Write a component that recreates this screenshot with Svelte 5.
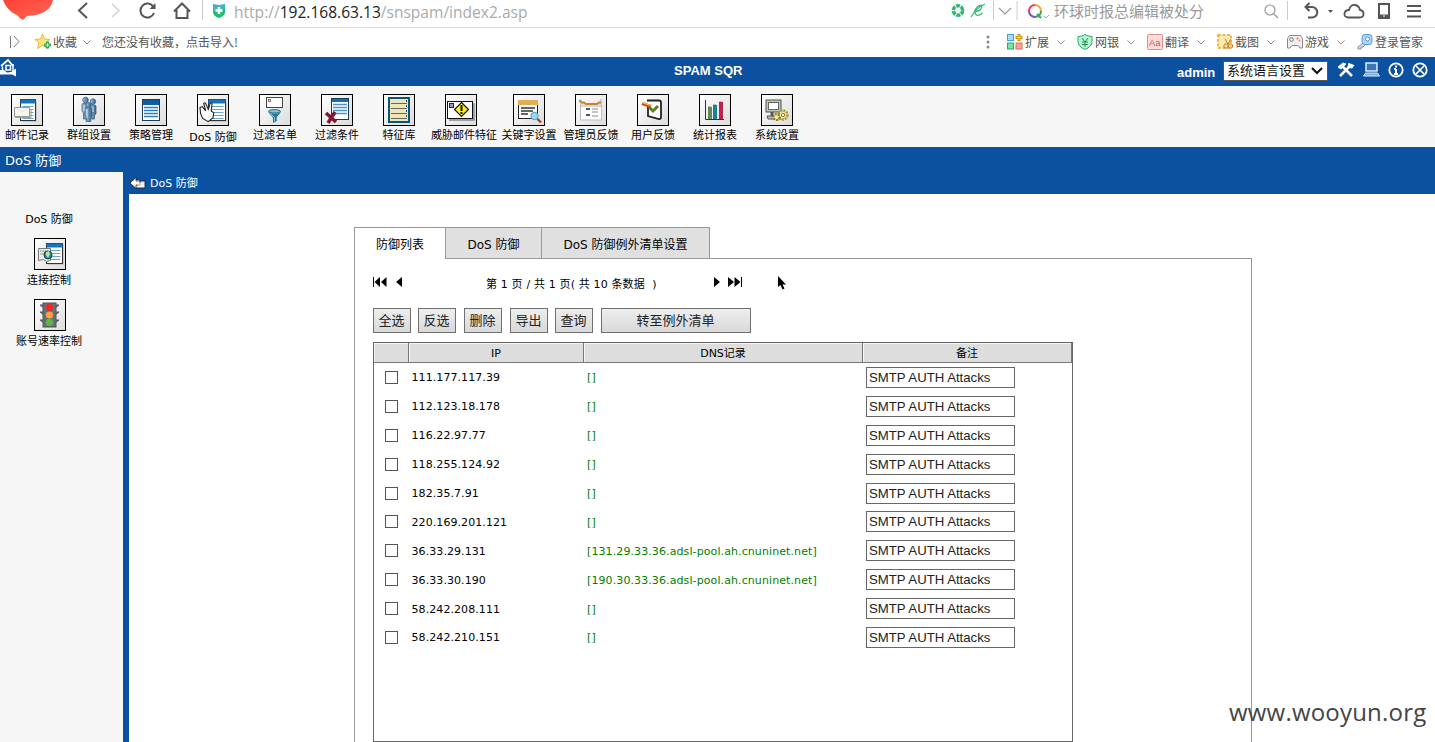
<script>
  const nav = [
    ['mail', '邮件记录'], ['group', '群组设置'], ['policy', '策略管理'], ['dos', 'DoS 防御'],
    ['filter', '过滤名单'], ['condition', '过滤条件'], ['library', '特征库'], ['threat', '威胁邮件特征'],
    ['keyword', '关键字设置'], ['admin', '管理员反馈'], ['user', '用户反馈'], ['report', '统计报表'], ['system', '系统设置']
  ];
  const side = [['connect', '连接控制'], ['traffic', '账号速率控制']];
  const tools = [
    ['ext', '扩展'], ['bank', '网银'], ['trans', '翻译'], ['shot', '截图'], ['game', '游戏'], ['key', '登录管家']
  ];
  const buttons = [['全选', 38, 7], ['反选', 38, 8], ['删除', 38, 8], ['导出', 38, 7], ['查询', 38, 8], ['转至例外清单', 150, 0]];
  const rows = [
    ['111.177.117.39', '[]'], ['112.123.18.178', '[]'], ['116.22.97.77', '[]'], ['118.255.124.92', '[]'],
    ['182.35.7.91', '[]'], ['220.169.201.121', '[]'],
    ['36.33.29.131', '[131.29.33.36.adsl-pool.ah.cnuninet.net]'],
    ['36.33.30.190', '[190.30.33.36.adsl-pool.ah.cnuninet.net]'],
    ['58.242.208.111', '[]'], ['58.242.210.151', '[]']
  ];
</script>

{#snippet sheet(x, y, w, h)}
  <rect x={x + 1} y={y + 1} width={w} height={h} fill="#aaa" />
  <rect {x} {y} width={w} height={h} fill="#fff" stroke="#333" stroke-width="1" />
  <rect {x} {y} width={w} height="4" fill="#1674bd" />
  {#each Array(Math.floor((h - 6) / 3)) as _, i}
    <path d="M{x + 2} {y + 7 + i * 3}h{w - 4}" stroke="#6aa6c8" />
  {/each}
{/snippet}

{#snippet icon(name)}
  <svg class="pic" width="32" height="32" viewBox="0 0 32 32" fill="none">
    <defs>
      <linearGradient id="bg-{name}" x2="1" y2="1"><stop stop-color="#fff" /><stop offset="1" stop-color="#dcdcdc" /></linearGradient>
      <linearGradient id="steel-{name}" x2="1"><stop stop-color="#a9c4d8" /><stop offset="1" stop-color="#315e87" /></linearGradient>
    </defs>
    <rect x=".5" y=".5" width="31" height="31" fill="url(#bg-{name})" stroke="#000" />
    {#if name === 'mail'}
      {@render sheet(9.5, 5.5, 15, 21)}
      <path d="M3.5 13.5h15v9h-15z" fill="#f6f6ee" stroke="#999" />
      <path d="M4 14l7 4 7-4" stroke="#e4e4e4" /><path d="M4 23.500h16V15" stroke="#b99a60" />
    {:else if name === 'group'}
      <g fill="url(#steel-{name})" stroke="#37648b" stroke-width=".8">
        <circle cx="12.5" cy="6" r="2.8" /><circle cx="20" cy="7.5" r="2.7" />
        <path d="M9 10q3.5-2 7 0v8l-1.5 1v6h-4v-6L9 17z" /><path d="M17.5 11q3-2 5.5 1v8l-1.5 1v4h-3v-5l-1.5-1z" />
        <circle cx="15.5" cy="11" r="2.6" /><path d="M12 14.5q3.5-2 7 0v7l-1.2 1v5h-4.6v-5l-1.2-1z" />
      </g>
      <path d="M14 15v9M11 11v6M20 13v5" stroke="#d8e7f1" />
    {:else if name === 'policy'}
      <rect x="7.5" y="5.5" width="17" height="21" fill="#fff" stroke="#223c58" />
      <path d="M8 6h16v5H8z" fill="#0f5c9e" />
      <path d="M9 13.500h14M9 16.500h14M9 19.500h14M9 22.500h14" stroke="#2781be" stroke-width="1.500" />
    {:else if name === 'dos'}
      {@render sheet(11.5, 5.5, 17, 21)}
      <path d="M3 13.500l2.300-.8 3.400 4.300-2-7.500q1-1.400 2 0l2.600 6 1.800-6q1.500-1.500 2 .3l-.9 7.200 2.600 1.800-.8 5-4.800 3.800-5.700-3.500-2-5z" fill="#fff" stroke="#222" stroke-width="1.100" />
    {:else if name === 'filter'}
      <rect x="7.5" y="3.5" width="16" height="10" fill="#fff" stroke="#444" /><rect x="9.5" y="5.5" width="2" height="2" stroke="#777" />
      <ellipse cx="15.5" cy="17.3" rx="6" ry="1.700" fill="#8dc1d3" stroke="#216f91" /><path d="M9 18l5 5.500v5.500l3.800-2v-4L22 18q-6.500 3-13 0z" fill="#25779a" /><path d="M11.500 19.500l4 4v4" stroke="#87cbda" />
    {:else if name === 'condition'}
      <rect x="10.5" y="4.5" width="17" height="21" fill="#fff" stroke="#173d58" /><path d="M11 5h16v3H11z" fill="#1370b8" />
      <path d="M12 10.500h14M12 13.500h14M12 16.500h14M12 19.500h14" stroke="#4795ca" stroke-width="1.500" />
      <path d="M5 19l10 9M14 18L7 29" stroke="#831635" stroke-width="3.5" />
    {:else if name === 'library'}
      <rect x="6" y="4" width="20" height="24" fill="#efe5bb" stroke="#095778" stroke-width="2" />
      <path d="M8 9.500h16M8 14.500h16M8 19.500h16M8 24.500h16" stroke="#696955" /><path d="M23.5 6v2M23.5 11v2M23.5 16v2M23.5 21v2" stroke="#2f4b67" />
    {:else if name === 'threat'}
      <path d="M4 26h25V9" stroke="#888" stroke-width="1.500" /><rect x="2.5" y="7.5" width="25" height="17" fill="#fff" stroke="#111" />
      <rect x="4.5" y="9.5" width="4" height="4" fill="#99c" stroke="#224" /><path d="M16.5 8.5l7 7-7 7-7-7z" fill="#ffed16" stroke="#111" stroke-width="1.2" /><path d="M16.5 11v6M16.5 18v2" stroke="#111" stroke-width="2" />
    {:else if name === 'keyword'}
      <rect x="5.500" y="6.5" width="19" height="18" fill="#fff" stroke="#222" /><path d="M5 6h20v5H5z" fill="#e4ae55" /><path d="M8 14h14M8 17h12M8 20h7" stroke="#333" stroke-width="1.5" />
      <circle cx="21.500" cy="22" r="3.700" fill="#8cdff5" stroke="#6796ae" /><path d="M24.500 25l3.500 3.500" stroke="#aa3831" stroke-width="2.3" />
    {:else if name === 'admin'}
      <path d="M5.5 10v16h21V10z" fill="#fff" stroke="#bbb" /><path d="M6 5v5M26 5v5M6 12h20" stroke="#aaa" /><path d="M4 6.500l3 2h2l2 1.500h11l2-1.500h2" stroke="#cb842d" stroke-width="1.800" />
      <path d="M11 15h4M11 21h4" stroke="#3b5a78" stroke-width="2" /><path d="M17 15h6M17 18h6M17 22h6" stroke="#888" />
    {:else if name === 'user'}
      <path d="M10 6.5h12q2 0 2 2v15q0 1.5-2 1.5l-11-3V10" fill="#fff" stroke="#222" stroke-width="1.800" />
      <path d="M5 9.500l9 3" stroke="#cf412a" stroke-width="3" /><path d="M5 8.500l9 3" stroke="#edb63d" stroke-width="1.500" /><path d="M12 13l4 4 5-5" stroke="#5b841b" stroke-width="3" />
    {:else if name === 'report'}
      <path d="M6.5 6v19.5H25" stroke="#333" /><path d="M9 13h4v12H9z" fill="#608d55" /><path d="M14 11h4v14h-4z" fill="#227e98" /><path d="M20 8h4v17h-4z" fill="#bf234b" /><path d="M9 12.500h3M14 10.500h3M20 7.500h3" stroke="#bbb" />
    {:else if name === 'system'}
      <rect x="5" y="6" width="15" height="12" fill="#bbc8bb" stroke="#4b574b" /><rect x="7.5" y="8.5" width="10" height="7" fill="#fff" stroke="#666" /><path d="M6 22h13l3 3H7z" fill="#b7c1b0" stroke="#535b50" /><path d="M11 18v4" stroke="#555" stroke-width="3" />
      <circle cx="22" cy="21" r="4.5" fill="#f7e99e" stroke="#a69844" stroke-width="2.5" stroke-dasharray="2 1" /><circle cx="15.5" cy="23" r="3" fill="#f7e99e" stroke="#837625" stroke-width="2" stroke-dasharray="2 1" /><circle cx="22" cy="21" r="1.7" fill="#fff" stroke="#847a35" />
    {:else if name === 'connect'}
      {@render sheet(12.5, 5.5, 16, 20)}
      <path d="M4.5 10.5h12v12l-4 1-3-2-5 1z" fill="#eee" stroke="#777" /><path d="M6 13h8M6 16h7" stroke="#999" /><circle cx="14" cy="17" r="4" fill="#258da0" stroke="#173d56" /><path d="M12 14l3-1 1 3-2 4-2-3" fill="#b5e49a" />
    {:else}
      <path d="M6 6h4v3zM6 13h4v3zM6 21h4v3zM25 6h-4v3zM25 13h-4v3zM25 21h-4v3z" fill="#668" stroke="#556" /><rect x="9" y="4" width="13" height="24" fill="#657078" stroke="#555" />
      <circle cx="15.5" cy="8.5" r="3.7" fill="#e72b2b" /><circle cx="15.5" cy="16" r="3.6" fill="#f6a83e" /><circle cx="15.5" cy="23.5" r="3.6" fill="#5db744" />
    {/if}
  </svg>
{/snippet}

{#snippet toolIcon(name)}
  <svg width="16" height="16" viewBox="0 0 16 16" fill="none">
    {#if name === 'ext'}
      <rect x=".5" y=".5" width="6" height="6" fill="#a5dcff" stroke="#3f9edb" /><rect x=".5" y="9" width="6" height="6" fill="#75e6a2" stroke="#20ae66" /><rect x="9" y="9" width="6" height="6" fill="#ffa794" stroke="#e46652" /><path d="M12 0v7M8.5 3.5h7" stroke="#c89012" stroke-width="3" /><path d="M12 1v5M9.5 3.5h5" stroke="#ffe445" />
    {:else if name === 'bank'}
      <path d="M8 .5q3 2 7 2v5q0 5-7 8-7-3-7-8v-5q4 0 7-2z" fill="#b7f6d5" stroke="#29a866" /><path d="M5 4l3 4 3-4M8 8v5M5 8h6M5 10.5h6" stroke="#238f56" />
    {:else if name === 'trans'}
      <rect x=".5" y=".5" width="15" height="15" rx="1" fill="#ffdcd9" stroke="#dc8f87" /><text x="2" y="11.5" class="aa">Aa</text>
    {:else if name === 'shot'}
      <rect x="1" y="1" width="13" height="13" fill="#ffecac" stroke="#e9a22c" stroke-width="1.5" stroke-dasharray="3 1.5" /><path d="M8 5l3 5M14 5l-3 5" stroke="#be7430" /><circle cx="9" cy="12" r="2.2" fill="#ffda8c" stroke="#c77b2b" /><circle cx="13.5" cy="12" r="2.2" fill="#ffda8c" stroke="#c77b2b" />
    {:else if name === 'game'}
      <path d="M2.500 1.500h11l2 3v9.500h-2.500l-2-2.500H5l-2 2.500H.5V4.5z" fill="#f0f0f1" stroke="#888" /><circle cx="4.5" cy="5.500" r="1.800" stroke="#777" /><circle cx="10.500" cy="4.5" r="1" fill="#e66" /><circle cx="12.500" cy="6.500" r="1" fill="#eb9b42" />
    {:else}
      <path d="M7 8l-6 5v2h3v-2h2l3-3" fill="#d9dce0" stroke="#8591a0" /><rect x="5" y=".5" width="10" height="10" rx="3" fill="#a9d7ff" stroke="#5898cd" /><circle cx="10.5" cy="5" r="2" fill="#fff" stroke="#5c93c4" />
    {/if}
  </svg>
{/snippet}

{#snippet chev()}
  <svg class="chev" width="8" height="5" viewBox="0 0 8 5" fill="none"><path d="M.5.5L4 4 7.5.5" stroke="#888" /></svg>
{/snippet}

<div class="window">
  <div class="address">
    <svg width="208" height="27" viewBox="0 0 208 27" fill="none">
      <defs><linearGradient id="logo" x2="1" y2="1"><stop stop-color="#ff4038" /><stop offset="1" stop-color="#ff6a54" /></linearGradient></defs>
      <path d="M3 0h50q-3 15-26 16l-4 4q-4-2-6-5Q7 11 3 0z" fill="url(#logo)" />
      <path d="M87 3l-8 7.5 8 7.5" stroke="#555" stroke-width="2" /><path d="M112 4l7 6.5-7 6.5" stroke="#d0d0d0" stroke-width="1.5" />
      <path d="M153.5 7A7 7 0 1 0 154 13" stroke="#555" stroke-width="2" /><path d="M155.5 3v6h-6z" fill="#555" />
      <path d="M174 11.5l8-8 8 8M176.5 10v8h11v-8" stroke="#555" stroke-width="2" /><path d="M202.5 0v20" stroke="#ccc" />
    </svg>
    <svg class="shield" width="14" height="16" viewBox="0 0 14 16"><path d="M1 1q6 2 12 0v8q0 4-6 6Q1 13 1 9z" fill="#18c26e" /><path d="M1 1q6 2 12 0v5L1 8z" fill="#3fb5bf" /><path d="M7 4v7M3.5 7.5h7" stroke="#fff" stroke-width="2.5" /></svg>
    <div class="url">http://<b>192.168.63.13</b>/snspam/index2.asp</div>
    <svg width="102" height="27" viewBox="0 0 102 27" fill="none">
      <circle cx="9" cy="10.5" r="4.7" stroke="#2eb872" stroke-width="3.5" stroke-dasharray="4 .9" />
      <path d="M34 5.500q-6-1-8 5-.5 4 2.500 5 3 0 5-3M25 11q6 1.500 8-4.500M36 4q-9 4-14 13" stroke="#2fb873" stroke-width="1.200" />
      <path d="M44.5 1v19M68 1v19" stroke="#ccc" /><path d="M50 8l6 6 6-6" stroke="#999" stroke-width="1.2" />
      <path d="M80 11a6 6 0 0 1 6-6" stroke="#ef3e47" stroke-width="2" /><path d="M86 5a6 6 0 0 1 6 6" stroke="#e9ad27" stroke-width="2" /><path d="M92 11a6 6 0 0 1-6 6M88 14l4 4" stroke="#33aa64" stroke-width="2" /><path d="M86 17a6 6 0 0 1-6-6" stroke="#7651cb" stroke-width="2" /><path d="M95 16l2 2 3-3" stroke="#aaa" />
    </svg>
    <div class="search">环球时报总编辑被处分</div>
    <svg width="177" height="27" viewBox="0 0 177 27" fill="none">
      <circle cx="12" cy="10" r="5" stroke="#999" stroke-width="1.2" /><path d="M16 14l4 4" stroke="#999" stroke-width="1.3" /><path d="M29.5 1v19" stroke="#ccc" />
      <path d="M51.5 3l-4 4 4 4M48 7h6a5 5 0 0 1 0 10.5h-4" stroke="#555" stroke-width="2" /><path d="M70 10h5l-2.5 3z" fill="#555" />
      <path d="M90 17.500q-4-.5-3.500-4t4.500-3.500q1.500-5.500 6-5 4 .5 5 5 3.500.5 3.500 4t-4 3.500z" stroke="#555" stroke-width="1.800" />
      <rect x="121" y="4" width="10" height="14" stroke="#555" stroke-width="2" /><path d="M121 16h10" stroke="#555" stroke-width="3" /><path d="M125 16h2" stroke="#fff" />
      <path d="M149 6h14M149 11h14M149 16.500h14" stroke="#555" stroke-width="2" />
    </svg>
  </div>

  <div class="bookmarks">
    <svg width="53" height="28" viewBox="0 0 53 28" fill="none"><path d="M10.500 8v12M14 8l5 5.500-5 5.500" stroke="#777" /><path d="M42.500 6l2 5 5.500.5-4 3.500 1.500 5.500-5-3-5 3 1.500-5.500-4-3.500 5.500-.5z" fill="#ffe476" stroke="#e9b745" /><path d="M47.500 13.500v7M44 17h7" stroke="#37aa59" stroke-width="3" /><path d="M47.500 15v4M45.500 17h4" stroke="#b7eeb4" /></svg>
    <span class="fav">收藏</span>{@render chev()}<span class="hint">您还没有收藏，点击导入!</span>
    <svg class="dots" width="4" height="14" viewBox="0 0 4 14" fill="#888"><circle cx="2" cy="2" r="1.500" /><circle cx="2" cy="7" r="1.500" /><circle cx="2" cy="12" r="1.500" /></svg>
    <div class="tools">
      {#each tools as [name, label], i}
        <div class="tool">{@render toolIcon(name)}<span>{label}</span>{#if i < 5}{@render chev()}{/if}</div>
      {/each}
    </div>
  </div>

  <header>
    <svg class="home" width="18" height="19" viewBox="0 0 18 19" fill="none"><path d="M1 8l7-6 5 6" stroke="#fff" stroke-width="1.800" /><path d="M2.500 8.500v5M13 6v7" stroke="#fff" stroke-width="1.500" /><path d="M6 7.500h4.500v4.500H6z" stroke="#fff" stroke-width="1.500" /><path d="M0 12h4l3 2.500 4-.5 5-3.500v8L12 16.500H0z" fill="#fff" /></svg>
    <h1>SPAM SQR</h1>
    <div class="account">
      <strong>admin</strong>
      <div class="select"><span>系统语言设置</span><svg width="12" height="8" viewBox="0 0 12 8" fill="none"><path d="M1 1l5 5 5-5" stroke="#111" stroke-width="2" /></svg></div>
      <svg width="94" height="18" viewBox="0 0 94 18" fill="none" stroke="#fff">
        <path d="M4 15L15 4M6 5l10 10" stroke-width="2.500" /><path d="M2 6l5-4 3 1-5 5zM13 2l-1 4 4 1 2-3" fill="#fff" />
        <rect x="30" y="2" width="11" height="8" fill="#3b77b7" stroke="#dcecff" stroke-width="1.500" /><path d="M27.500 15h16l-2-3H29.500z" fill="#7baddf" stroke="#dcecff" />
        <circle cx="60" cy="9" r="6.700" stroke-width="1.800" /><path d="M60 4.500v2M60 8v5M58 13h4M58 8h2" stroke-width="2" />
        <circle cx="84" cy="9" r="6.700" stroke-width="1.800" /><path d="M80 5l8 8M88 5l-8 8" stroke-width="1.700" />
      </svg>
    </div>
  </header>

  <nav>
    {#each nav as [name, label]}
      <div class="item {name}">{@render icon(name)}<span>{label}</span></div>
    {/each}
  </nav>
  <div class="title">DoS 防御</div>

  <main>
    <aside>
      <div class="heading">DoS 防御</div>
      {#each side as [name, label]}
        <div class="sideitem">{@render icon(name)}<span>{label}</span></div>
      {/each}
    </aside>
    <section>
      <div class="crumb"><svg width="16" height="12" viewBox="0 0 16 12" fill="none"><path d="M5 2.500h4l1 1.500h5v7H5z" fill="#e5e5e5" stroke="#222" stroke-width=".8" /><path d="M0 6l6-5.500V4h4v4H6v3.500z" fill="#fff" stroke="#111" stroke-width=".700" /><path d="M8 7h6M8 9h6" stroke="#fff" /></svg><span>DoS 防御</span></div>
      <div class="content">
        <div class="tabs"><div class="tab active">防御列表</div><div class="tab two">DoS 防御</div><div class="tab three">DoS 防御例外清单设置</div></div>
        <div class="panel">
          <div class="pager">
            <svg width="30" height="12" viewBox="0 0 30 12"><path d="M0 1h1v10H0zM7 1v10L1.500 6zM13.500 1v10L8 6zM29 1v10l-6-5z" /></svg>
            <span>第 1 页 / 共 1 页( 共 10 条数据 &nbsp;)</span>
            <svg width="28" height="12" viewBox="0 0 28 12"><path d="M0 1v10l6-5zM14 1v10l6-5zM20.500 1v10l6-5zM27 1h1v10h-1z" /></svg>
            <svg class="cursor" width="10" height="15" viewBox="0 0 10 15"><path d="M1 0v11l2.500-2 2 4.500 2-1-2-4H9z" /></svg>
          </div>
          <div class="buttons">
            {#each buttons as [label, w, gap]}<button style="width:{w}px;margin-right:{gap}px">{label}</button>{/each}
          </div>
          <div class="table">
            <div class="row head"><div></div><div>IP</div><div>DNS记录</div><div>备注</div></div>
            {#each rows as [ip, dns]}
              <div class="row"><div><i class="check"></i></div><div class="ip">{ip}</div><div class="dns">{dns}</div><div><div class="field">SMTP AUTH Attacks</div></div></div>
            {/each}
          </div>
        </div>
      </div>
    </section>
  </main>
  <div class="watermark">www.wooyun.org</div>
</div>

<style>
  :global(body) { margin: 0; overflow: hidden; background: #fff; }
  .window { position: relative; width: 1435px; height: 742px; overflow: hidden; display: flex; flex-direction: column; font: 11px "DejaVu Sans", "Noto Sans CJK SC", sans-serif; color: #000; }
  .window, .window * { box-sizing: border-box; }
  svg { display: block; flex: none; }
  .address { height: 28px; flex: none; display: flex; border-bottom: 1px solid #d8d8d8; }
  .shield { margin: 3px 0 0 4px; }
  .url { width: 722px; padding-left: 8px; font: 15.55px/24px "Open Sans", sans-serif; color: #aaa; white-space: nowrap; }
  .url b { font-weight: 400; color: #222; }
  .address > svg:nth-of-type(3) { margin-left: 1px; }
  .search { width: 207px; padding-left: 3px; font: 15px/22px "Noto Sans CJK SC", sans-serif; color: #999; white-space: nowrap; }
  .bookmarks { height: 29px; flex: none; display: flex; align-items: center; padding-bottom: 1px; font: 12px/28px "Noto Sans CJK SC", sans-serif; color: #555; }
  .fav { width: 30px; }
  .hint { margin-left: 11px; width: 884px; white-space: nowrap; }
  .dots { margin-right: 17px; }
  .tools { display: flex; }
  .tool { width: 70px; display: flex; align-items: center; white-space: nowrap; }
  .tool span { margin: 0 8px 0 2px; width: 24px; }
  .aa { font: 9.5px "Liberation Sans", sans-serif; fill: #c75c57; }
  header { height: 29px; flex: none; display: grid; grid-template-columns: 674px 1fr 258px; background: #0c519f; color: #fff; }
  .home { margin-top: 1px; }
  h1 { margin: 0; font: bold 12px/27px "Liberation Sans", sans-serif; letter-spacing: .75px; }
  h1 { letter-spacing: 0; font-size: 13px; }
  .account { display: flex; padding-top: 4px; }
  strong { width: 46px; font: bold 13px/23px "Liberation Sans", sans-serif; }
  .select { width: 105px; height: 20px; margin-right: 8px; padding: 0 4px 0 3px; display: flex; align-items: center; justify-content: space-between; background: #fff; border: 1px solid #555; color: #111; font: 13px/16px "Noto Sans CJK SC", sans-serif; white-space: nowrap; }
  .select span { margin-top: -2px; }
  nav { height: 61px; flex: none; padding-top: 8px; display: flex; background: #f6f6f6; }
  .item { width: 62px; flex: none; display: flex; flex-direction: column; align-items: center; white-space: nowrap; }
  .item:first-child { margin-left: -4px; }
  .item span { line-height: 20px; }
  .item.dos span { line-height: 23px; }
  .item.threat { width: 68px; }
  .item.threat svg { margin-right: 6px; }
  .title { height: 25px; flex: none; padding-left: 5px; background: #0c519f; color: #fff; font-size: 13px; line-height: 28px; }
  main { flex: 1; min-height: 0; display: flex; }
  aside { width: 123px; flex: none; padding: 37px 25px 0 0; display: flex; flex-direction: column; align-items: center; background: #f6f6f6; }
  .heading { height: 29px; line-height: 22px; }
  .sideitem { height: 61px; display: flex; flex-direction: column; align-items: center; line-height: 21px; white-space: nowrap; }
  .sideitem svg { margin-left: 2px; }
  section { flex: 1; display: flex; flex-direction: column; border-left: 6px solid #0c519f; }
  .crumb { height: 22px; flex: none; display: flex; align-items: center; padding-left: 1px; background: #0c519f; color: #fff; }
  .crumb span { margin: -2px 0 0 4px; }
  .content { flex: 1; min-height: 0; padding: 33px 0 0 225px; display: flex; flex-direction: column; }
  .tabs { height: 31px; flex: none; display: flex; position: relative; }
  .tab { border: 1px solid #999; border-bottom: 0; border-left: 0; background: #e0e0e0; text-align: center; font-size: 12px; line-height: 35px; white-space: nowrap; }
  .tab.active { width: 92px; height: 32px; border-left: 1px solid #999; background: #fff; z-index: 1; }
  .two { width: 96px; }
  .three { width: 168px; }
  .panel { width: 898px; flex: 1; min-height: 0; padding: 17px 18px 0; border: 1px solid #999; border-bottom: 0; display: flex; flex-direction: column; }
  .pager { height: 32px; display: flex; flex: none; }
  .pager span { width: 228px; margin-left: 83px; line-height: 18px; letter-spacing: .15px; white-space: nowrap; }
  .pager .cursor { margin-left: 35px; }
  .buttons { display: flex; height: 34px; flex: none; }
  button { height: 25px; padding: 0 1px 2px 0; border: 1px solid #707070; background: linear-gradient(#eee, #d8d8d8); color: #222; font: 13px/20px "Noto Sans CJK SC", sans-serif; white-space: nowrap; }
  .table { width: 700px; flex: 1; min-height: 0; border: 1px solid #666; }
  .row { height: 28.9px; display: grid; grid-template-columns: 35px 175px 279px 209px; align-items: center; }
  .head { height: 20px; background: #ddd; border-bottom: 1px solid #777; }
  .head > div { height: 19px; border-right: 1px solid #777; text-align: center; line-height: 22px; box-shadow: inset 1px 1px #f4f4f4; }
  .check { display: block; width: 13px; height: 13px; margin-left: 11px; border: 1px solid #555; background: #fff; }
  .ip { padding: 1px 0 0 2.5px; letter-spacing: .08px; }
  .dns { padding: 1px 0 0 3px; color: #008000; letter-spacing: .1px; white-space: nowrap; }
  .field { width: 149px; height: 21px; margin-left: 3px; padding-left: 2px; border: 1px solid #666; font: 13.2px/19px "Liberation Sans", sans-serif; color: #222; }
  .watermark { position: absolute; left: 1229px; top: 695px; font: 24px/34px "Open Sans", sans-serif; letter-spacing: .2px; color: #444; white-space: nowrap; }
</style>
